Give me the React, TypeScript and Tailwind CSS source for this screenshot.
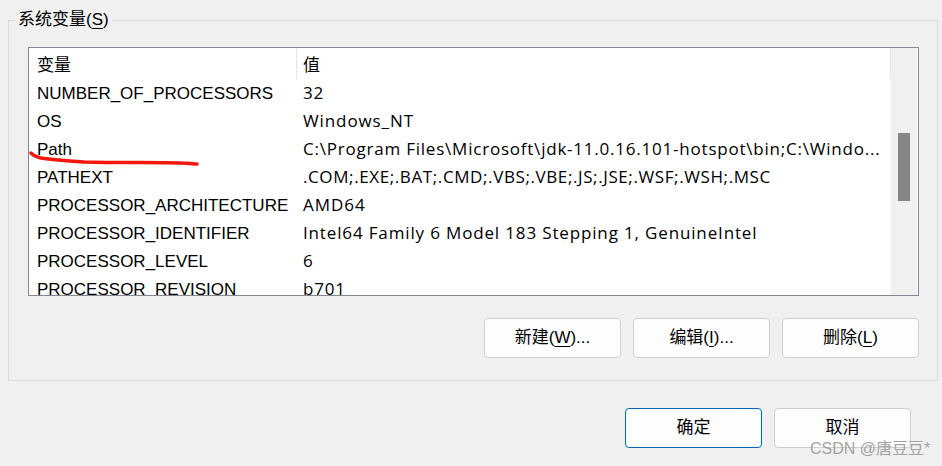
import React from "react";

const rows: [string, string, string][] = [
  ["NUMBER_OF_PROCESSORS", "32", "tracking-[0.8px]"],
  ["OS", "Windows_NT", "tracking-[0.9px]"],
  ["Path", "C:\\Program Files\\Microsoft\\jdk-11.0.16.101-hotspot\\bin;C:\\Windo...", "tracking-[0.78px]"],
  ["PATHEXT", ".COM;.EXE;.BAT;.CMD;.VBS;.VBE;.JS;.JSE;.WSF;.WSH;.MSC", "tracking-[0.6px]"],
  ["PROCESSOR_ARCHITECTURE", "AMD64", "tracking-[1px]"],
  ["PROCESSOR_IDENTIFIER", "Intel64 Family 6 Model 183 Stepping 1, GenuineIntel", "tracking-[0.85px]"],
  ["PROCESSOR_LEVEL", "6", "tracking-[0.5px]"],
  ["PROCESSOR_REVISION", "b701", "tracking-[0.8px]"],
];

const font = { fontFamily: '"Liberation Sans", "Noto Sans CJK SC", sans-serif' };
const valFont = { fontFamily: '"Open Sans", "Noto Sans CJK SC", sans-serif' };

function Btn({ children, primary }: { children: React.ReactNode; primary?: boolean }) {
  return (
    <button
      className={
        primary
          ? "w-[137px] h-[40px] rounded-[4px] border-[1.5px] border-[#0067c0] bg-[#fdfdfd] text-[17px] text-black flex items-center justify-center"
          : "w-[137px] h-[40px] rounded-[4px] border border-[#d0d0d0] bg-[#fdfdfd] text-[17px] text-black flex items-center justify-center"
      }
    >
      {children}
    </button>
  );
}

export default function App() {
  return (
    <div
      className="relative w-[942px] h-[466px] bg-[#f0f0f0] overflow-hidden text-black"
      style={font}
    >
      <div className="pt-[20px] pl-[8px]">
        <div className="relative w-[930px] h-[361px] border border-[#dcdcdc] pt-[26px] pl-[19px]">
          <div className="absolute left-[6px] top-[-12px] bg-[#f0f0f0] px-[3px] text-[17px] leading-[22px]">
            系统变量(<span className="underline underline-offset-[3px]">S</span>)
          </div>
          {/* list view */}
          <div className="relative w-[891px] h-[249px] border border-[#828790] bg-white flex overflow-hidden">
            <div className="w-[862px] flex flex-col">
              <div className="flex h-[32px] shrink-0 text-[17px] items-center">
                <div className="w-[267px] h-full pl-[8px] flex items-center pt-[4px]">变量</div>
                <div className="w-[1px] h-[31px] self-start bg-[#e5e5e5]" />
                <div className="flex-1 h-full pl-[6px] flex items-center pt-[4px]">值</div>
                <div className="w-[1px] h-[31px] self-start bg-[#e5e5e5]" />
              </div>
              {rows.map(([k, v, t]) => (
                <div key={k} className="flex h-[28px] shrink-0 items-center text-[17px] whitespace-nowrap">
                  <div className="w-[268px] pl-[8px] overflow-hidden">{k}</div>
                  <div className={"w-[594px] pl-[6px] pb-[2px] overflow-hidden " + t} style={valFont}>
                    {v}
                  </div>
                </div>
              ))}
            </div>
            {/* scrollbar */}
            <div className="w-[26px] h-full bg-[#f0f0f0] pt-[85px] pl-[7px]">
              <div className="w-[12px] h-[68px] bg-[#858585]" />
            </div>
            <svg className="absolute left-0 top-0 pointer-events-none" width="300" height="200">
              <path
                d="M2 105 C5 108 8 109 12 110 C25 112 40 113 55 114 C90 115 130 114 152 115 C160 115 165 116 168 116"
                stroke="#f5160c"
                strokeWidth="3.5"
                fill="none"
                strokeLinecap="round"
              />
            </svg>
          </div>
          <div className="flex justify-end gap-[12px] mt-[22px] w-[891px]">
            <Btn>
              新建(<span className="underline underline-offset-[3px]">W</span>)...
            </Btn>
            <Btn>
              编辑(<span className="underline underline-offset-[3px]">I</span>)...
            </Btn>
            <Btn>
              删除(<span className="underline underline-offset-[3px]">L</span>)
            </Btn>
          </div>
        </div>
        <div className="flex gap-[12px] mt-[27px] ml-[617px]">
          <Btn primary>确定</Btn>
          <Btn>取消</Btn>
        </div>
      </div>
      <div className="absolute left-[810px] top-[439px] text-[16px] text-[#a3a3a3] leading-[20px]">
        CSDN @唐豆豆*
      </div>
    </div>
  );
}
